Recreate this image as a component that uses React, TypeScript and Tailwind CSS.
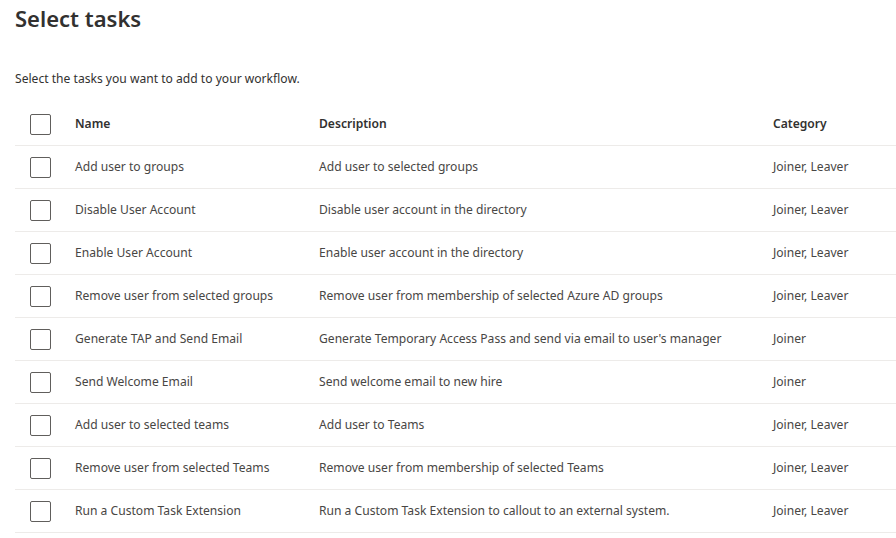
const tasks = [
  ["Add user to groups", "Add user to selected groups", "Joiner, Leaver"],
  ["Disable User Account", "Disable user account in the directory", "Joiner, Leaver"],
  ["Enable User Account", "Enable user account in the directory", "Joiner, Leaver"],
  ["Remove user from selected groups", "Remove user from membership of selected Azure AD groups", "Joiner, Leaver"],
  ["Generate TAP and Send Email", "Generate Temporary Access Pass and send via email to user's manager", "Joiner"],
  ["Send Welcome Email", "Send welcome email to new hire", "Joiner"],
  ["Add user to selected teams", "Add user to Teams", "Joiner, Leaver"],
  ["Remove user from selected Teams", "Remove user from membership of selected Teams", "Joiner, Leaver"],
  ["Run a Custom Task Extension", "Run a Custom Task Extension to callout to an external system.", "Joiner, Leaver"],
];

const Checkbox = () => (
  <div className="w-[21px] h-[21px] border border-[#605e5c] rounded-[2px] bg-white" />
);

export default function App() {
  return (
    <div
      className="min-h-screen bg-white pl-[15px] text-[#323130] overflow-hidden"
      style={{ fontFamily: '"Segoe UI", "Noto Sans", sans-serif' }}
    >
      <h1 className="text-[22px] leading-[36px] font-semibold">Select tasks</h1>
      <p className="mt-[33px] text-[12.1px] leading-[20px]">
        Select the tasks you want to add to your workflow.
      </p>
      <div className="mt-[14px] w-[900px] text-[12.1px]">
        {/* header */}
        <div className="flex items-center h-[43px] border-b border-[#edebe9] font-semibold">
          <div className="w-[60px] pl-[15px]">
            <Checkbox />
          </div>
          <div className="w-[244px]">Name</div>
          <div className="w-[454px]">Description</div>
          <div className="flex-1">Category</div>
        </div>
        {tasks.map(([name, desc, cat]) => (
          <div
            key={name}
            className="flex items-center h-[43px] border-b border-[#edebe9] text-[#484644]"
          >
            <div className="w-[60px] pl-[15px]">
              <Checkbox />
            </div>
            <div className="w-[244px]">{name}</div>
            <div className="w-[454px]">{desc}</div>
            <div className="flex-1">{cat}</div>
          </div>
        ))}
      </div>
    </div>
  );
}
